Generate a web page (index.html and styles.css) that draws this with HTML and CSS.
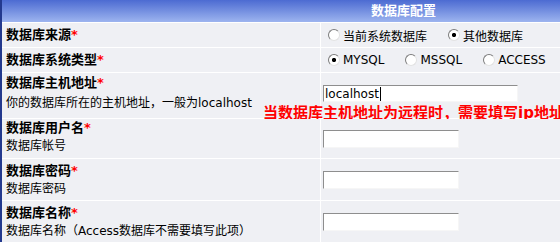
FILE: index.html
```html
<!DOCTYPE html>
<html>
<head>
  <link rel="stylesheet" href="styles.css">
</head>
<body>
  <div class="config">
    <div class="config-head">数据库配置</div>

    <div class="row row-short">
      <div class="label-cell"><span class="label">数据库来源<em>*</em></span></div>
      <div class="field-cell">
        <label class="choice"><input type="radio" name="source"> 当前系统数据库</label>
        <label class="choice"><input type="radio" name="source" checked> 其他数据库</label>
      </div>
    </div>

    <div class="row row-short">
      <div class="label-cell"><span class="label">数据库系统类型<em>*</em></span></div>
      <div class="field-cell">
        <label class="choice"><input type="radio" name="dbtype" checked> MYSQL</label>
        <label class="choice"><input type="radio" name="dbtype"> MSSQL</label>
        <label class="choice"><input type="radio" name="dbtype"> ACCESS</label>
      </div>
    </div>

    <div class="row row-host">
      <div class="label-cell">
        <span class="label">数据库主机地址<em>*</em></span>
        <span class="desc">你的数据库所在的主机地址，一般为localhost</span>
      </div>
      <div class="field-cell">
        <span class="host-input">
          <input type="text" class="text-input wide" value="localhost">
          <i class="caret"></i>
        </span>
      </div>
      <span class="host-note">当数据库主机地址为远程时，需要填写ip地址</span>
    </div>

    <div class="row row-user">
      <div class="label-cell">
        <span class="label">数据库用户名<em>*</em></span>
        <span class="desc">数据库帐号</span>
      </div>
      <div class="field-cell"><input type="text" class="text-input"></div>
    </div>

    <div class="row row-pass">
      <div class="label-cell">
        <span class="label">数据库密码<em>*</em></span>
        <span class="desc">数据库密码</span>
      </div>
      <div class="field-cell"><input type="password" class="text-input"></div>
    </div>

    <div class="row row-name">
      <div class="label-cell">
        <span class="label">数据库名称<em>*</em></span>
        <span class="desc">数据库名称（Access数据库不需要填写此项）</span>
      </div>
      <div class="field-cell"><input type="text" class="text-input"></div>
    </div>
  </div>
</body>
</html>
```

FILE: styles.css
```css
:root {
  --cell-bg: #eff0f4;
  --head-top: #4c6bd2;
  --head-bottom: #9db4ef;
  --edge: #23398e;
}

html,
body {
  overflow: hidden;
}

body {
  margin: 0;
  background: #fff;
  font-family: "DejaVu Sans", "Noto Sans CJK SC", sans-serif;
  font-size: 12px;
  color: #000;
}

.config {
  width: 803px;
  display: flex;
  flex-direction: column;
  gap: 1px;
  border-left: 2px solid var(--edge);
  background: #fff;
}

.config-head {
  height: 22px;
  line-height: 22px;
  text-align: center;
  font-size: 13px;
  font-weight: bold;
  color: #fff;
  background: linear-gradient(var(--head-top), var(--head-bottom));
}

.row {
  position: relative;
  display: grid;
  grid-template-columns: 318px 1fr;
  column-gap: 1px;
}

.row-short { height: 24px; }
.row-host { height: 45px; }
.row-user { height: 39px; }
.row-pass { height: 41px; }
.row-name { height: 41px; }

.label-cell,
.field-cell {
  background: var(--cell-bg);
  display: flex;
}

.label-cell {
  flex-direction: column;
  justify-content: center;
  padding: 0 4px;
}

.row-host .label-cell {
  justify-content: flex-start;
  padding-top: 1px;
}

.row-user .label-cell {
  justify-content: flex-start;
}

.field-cell {
  align-items: center;
  padding-left: 2px;
}

.row-short .field-cell {
  padding-left: 7px;
}

.label {
  font-size: 13px;
  font-weight: bold;
  line-height: 18px;
}

.label em {
  font-style: normal;
  color: #f00;
}

.desc {
  line-height: 18px;
}

.row-host .desc {
  margin-top: 2px;
}

/* old windows style radio */
.choice {
  display: flex;
  align-items: center;
  margin-right: 21px;
  white-space: nowrap;
}

.choice input {
  -webkit-appearance: none;
  appearance: none;
  width: 12px;
  height: 12px;
  margin: 0 3px 0 0;
  border-radius: 50%;
  border: 1px solid;
  border-color: #7c7c7c #e2e2e2 #e2e2e2 #7c7c7c;
  background: #fff;
}

.choice input:checked {
  background: radial-gradient(circle, #000 0 1.8px, #fff 2.4px);
}

.text-input {
  box-sizing: border-box;
  width: 136px;
  height: 18px;
  margin: 0;
  padding: 0 1px;
  border: 1px solid;
  border-color: #8e8e8e #f6f6f6 #f6f6f6 #8e8e8e;
  background: #fff;
  font-family: "DejaVu Sans", sans-serif;
  font-size: 12px;
  color: #000;
  outline: none;
}

.text-input.wide {
  width: 195px;
  height: 17px;
}

.row-host .field-cell {
  align-items: flex-start;
  padding-top: 12px;
}

.host-input {
  position: relative;
  display: flex;
}

.caret {
  position: absolute;
  left: 57px;
  top: 2px;
  width: 1px;
  height: 14px;
  background: #000;
}

.host-note {
  position: absolute;
  left: 261px;
  top: 31px;
  line-height: 18px;
  font-size: 15px;
  font-weight: bold;
  color: #f00;
  white-space: nowrap;
}
```
